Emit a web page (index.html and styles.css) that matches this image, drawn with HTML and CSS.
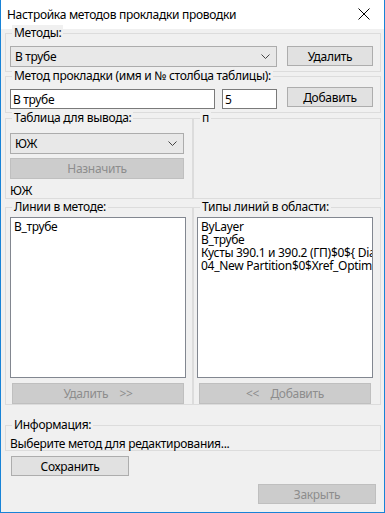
FILE: index.html
```html
<!DOCTYPE html>
<html lang="ru">
<head>
    <meta charset="UTF-8">
    <title>Настройка методов прокладки проводки</title>
    <link rel="stylesheet" href="styles.css">
</head>
<body>
    <div class="window">
        <div class="titlebar">
            <span class="title">Настройка методов прокладки проводки</span>
            <svg class="close" width="12" height="12" viewBox="0 0 12 12">
                <path d="M0.5 0.5 L11.5 11.5 M11.5 0.5 L0.5 11.5" stroke="#000" stroke-width="1" fill="none"/>
            </svg>
        </div>

        <div class="content">
            <!-- методы -->
            <div class="group g-methods">
                <span class="legend">Методы:</span>
                <div class="row">
                    <div class="combo w-method">
                        <span>В трубе</span>
                        <svg width="9" height="5" viewBox="0 0 9 5"><polyline points="0.5,0.5 4.5,4.5 8.5,0.5" stroke="#444" fill="none"/></svg>
                    </div>
                    <button class="btn w-side">Удалить</button>
                </div>
            </div>

            <!-- имя и столбец -->
            <div class="group g-name">
                <span class="legend">Метод прокладки (имя и № столбца таблицы):</span>
                <div class="row">
                    <input class="field w-name" type="text" value="В трубе">
                    <input class="field w-col" type="text" value="5">
                    <button class="btn w-side btn-add">Добавить</button>
                </div>
            </div>

            <div class="pair">
                <div class="group g-table">
                    <span class="legend">Таблица для вывода:</span>
                    <div class="combo w-table">
                        <span>ЮЖ</span>
                        <svg width="9" height="5" viewBox="0 0 9 5"><polyline points="0.5,0.5 4.5,4.5 8.5,0.5" stroke="#444" fill="none"/></svg>
                    </div>
                    <button class="btn btn-off w-table assign" disabled>Назначить</button>
                    <div class="current">ЮЖ</div>
                </div>
                <div class="group g-table right">
                    <span class="legend">п</span>
                </div>
            </div>

            <div class="pair pair-lists">
                <div class="group g-lines">
                    <span class="legend">Линии в методе:</span>
                    <div class="listbox">
                        <div>В_трубе</div>
                    </div>
                    <button class="btn btn-off list-btn" disabled>Удалить&nbsp;&nbsp;&nbsp;&nbsp;&gt;&gt;</button>
                </div>
                <div class="group g-lines right">
                    <span class="legend">Типы линий в области:</span>
                    <div class="listbox">
                        <div>ByLayer</div>
                        <div>В_трубе</div>
                        <div>Кусты 390.1 и 390.2 (ГП)$0${ Diameter }</div>
                        <div>04_New Partition$0$Xref_Optimum$0$Lines</div>
                    </div>
                    <button class="btn btn-off list-btn" disabled>&lt;&lt;&nbsp;&nbsp;&nbsp;&nbsp;Добавить</button>
                </div>
            </div>

            <div class="group g-info">
                <span class="legend">Информация:</span>
                <div class="info-text">Выберите метод для редактирования...</div>
            </div>

            <button class="btn w-bottom save">Сохранить</button>
            <div class="footer">
                <button class="btn btn-off w-bottom" disabled>Закрыть</button>
            </div>
        </div>
    </div>
</body>
</html>
```

FILE: styles.css
```css
body {
    margin: 0;
    font-family: "Noto Sans", Arial, sans-serif;
    font-size: 12px;
    letter-spacing: -0.3px;
    color: #000;
    background: #fff;
}
.window {
    width: 385px;
    height: 513px;
    box-sizing: border-box;
    border: 1px solid #1883d7;
    border-top: none;
    background: #f0f0f0;
}
.titlebar {
    height: 29px;
    background: #fff;
    display: flex;
    align-items: center;
    justify-content: space-between;
    padding: 0 14px 0 6px;
}
.title {
    font-size: 12px;
}
.close {
    display: block;
    margin-top: -1px;
}
.content {
    padding: 4px 0 0 4px;
}
.group {
    position: relative;
    border: 1px solid #dcdcdc;
    box-sizing: border-box;
}
.legend {
    position: absolute;
    left: 6px;
    top: -9px;
    line-height: 16px;
    padding: 0 2px;
    background: #f0f0f0;
    white-space: nowrap;
}
.row {
    display: flex;
    align-items: flex-start;
}
.g-methods {
    width: 376px;
    padding: 12px 0 4px 4px;
}
.g-name {
    width: 376px;
    margin-top: 4px;
    padding: 11px 0 3px 4px;
}
.combo {
    height: 21px;
    box-sizing: border-box;
    border: 1px solid #acacac;
    background: #e8e8e8;
    display: flex;
    align-items: center;
    justify-content: space-between;
    padding: 0 6px 0 4px;
}
.w-method {
    width: 267px;
}
.btn {
    height: 20px;
    box-sizing: border-box;
    border: 1px solid #adadad;
    background: #e1e1e1;
    font-family: inherit;
    font-size: 12px;
    letter-spacing: inherit;
    color: #000;
    padding: 0;
}
.btn-off {
    background: #cccccc;
    border-color: #bfbfbf;
    color: #8d8d8d;
}
.w-side {
    width: 86px;
    margin-left: 10px;
}
.btn-add {
    margin-top: -1px;
}
.field {
    height: 20px;
    box-sizing: border-box;
    border: 1px solid #7a7a7a;
    background: #fff;
    font-family: inherit;
    font-size: 12px;
    letter-spacing: inherit;
    padding: 0 2px;
    margin: 1px 0 0 0;
}
.w-name {
    width: 205px;
}
.w-col {
    width: 55px;
    margin-left: 7px;
}
.pair {
    display: flex;
    margin-top: 5px;
}
.g-table {
    width: 188px;
    height: 81px;
    padding: 14px 0 0 4px;
}
.right {
    padding-left: 3px;
}
.w-table {
    width: 174px;
}
.assign {
    display: block;
    height: 21px;
    margin-top: 4px;
}
.current {
    line-height: 16px;
    margin-top: 4px;
}
.pair-lists {
    margin-top: 8px;
}
.g-lines {
    width: 188px;
    height: 198px;
    padding: 9px 0 0 4px;
}
.g-lines.right {
    padding-left: 3px;
}
.listbox {
    width: 176px;
    height: 161px;
    box-sizing: border-box;
    border: 1px solid #828790;
    background: #fff;
    padding: 2px 3px;
    line-height: 13px;
    overflow: hidden;
    white-space: nowrap;
}
.list-btn {
    display: block;
    width: 172px;
    height: 21px;
    margin: 5px 0 0 2px;
}
.g-info {
    width: 376px;
    height: 26px;
    margin-top: 20px;
    padding: 10px 0 0 4px;
}
.info-text {
    line-height: 16px;
}
.w-bottom {
    width: 118px;
    height: 20px;
}
.save {
    display: block;
    margin: 5px 0 0 6px;
}
.footer {
    display: flex;
    justify-content: flex-end;
    padding-right: 8px;
    margin-top: 8px;
}
```
